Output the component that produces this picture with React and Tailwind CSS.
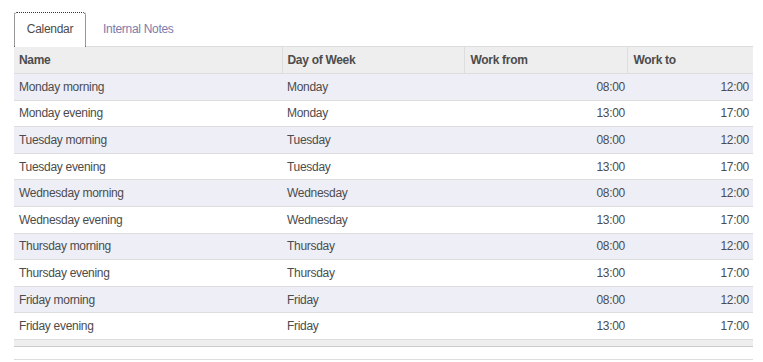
import React from "react";

const rows = [
  ["Monday morning", "Monday", "08:00", "12:00"],
  ["Monday evening", "Monday", "13:00", "17:00"],
  ["Tuesday morning", "Tuesday", "08:00", "12:00"],
  ["Tuesday evening", "Tuesday", "13:00", "17:00"],
  ["Wednesday morning", "Wednesday", "08:00", "12:00"],
  ["Wednesday evening", "Wednesday", "13:00", "17:00"],
  ["Thursday morning", "Thursday", "08:00", "12:00"],
  ["Thursday evening", "Thursday", "13:00", "17:00"],
  ["Friday morning", "Friday", "08:00", "12:00"],
  ["Friday evening", "Friday", "13:00", "17:00"],
];

const App = () => {
  return (
    <div className="w-[763px] h-[362px] bg-white pl-[14px] pr-[10px] pt-[12px] overflow-hidden text-[12px] tracking-[-0.3px] text-[#4c4c4c] font-['Liberation_Sans',Arial,sans-serif]">
      <div className="flex items-end h-[35px]">
        <div className="h-[35px] w-[72px] flex items-center justify-center pb-[2px] border border-dotted border-[#333] border-b-0 rounded-t-[3px] relative z-10 bg-white">
          Calendar
        </div>
        <div className="h-[35px] px-[17px] pb-[2px] flex items-center text-[#7c7bad]">Internal Notes</div>
      </div>

      <table className="w-[739px] table-fixed border-collapse -mt-px">
        <colgroup>
          <col className="w-[268px]" />
          <col className="w-[182px]" />
          <col className="w-[163px]" />
          <col className="w-[126px]" />
        </colgroup>
        <thead>
          <tr className="bg-[#eeeeee] h-[27px] border-t border-b border-[#dddddd]">
            <th className="text-left font-bold pl-[5px] text-[#4c4c4c]">Name</th>
            <th className="text-left font-bold pl-[5px] border-l border-[#dddddd]">Day of Week</th>
            <th className="text-left font-bold pl-[6px] border-l border-[#dddddd]">Work from</th>
            <th className="text-left font-bold pl-[6px] border-l border-[#dddddd]">Work to</th>
          </tr>
        </thead>
        <tbody>
          {rows.map((r, i) => (
            <tr
              key={i}
              className={`h-[26.6px] border-b border-[#dddddd] ${i % 2 === 0 ? "bg-[#eeeef6]" : "bg-white"}`}
            >
              <td className="pl-[5px]">{r[0]}</td>
              <td className="pl-[5px]">{r[1]}</td>
              <td className="text-right pr-[2px]">{r[2]}</td>
              <td className="text-right pr-[4px]">{r[3]}</td>
            </tr>
          ))}
        </tbody>
        <tfoot>
          <tr className="h-[7px] bg-[#eeeeee] border-b border-[#cccccc]">
            <td colSpan={4}></td>
          </tr>
        </tfoot>
      </table>
      <div className="w-[739px] mt-[12px] border-t border-[#dddddd]"></div>
    </div>
  );
};

export default App;
